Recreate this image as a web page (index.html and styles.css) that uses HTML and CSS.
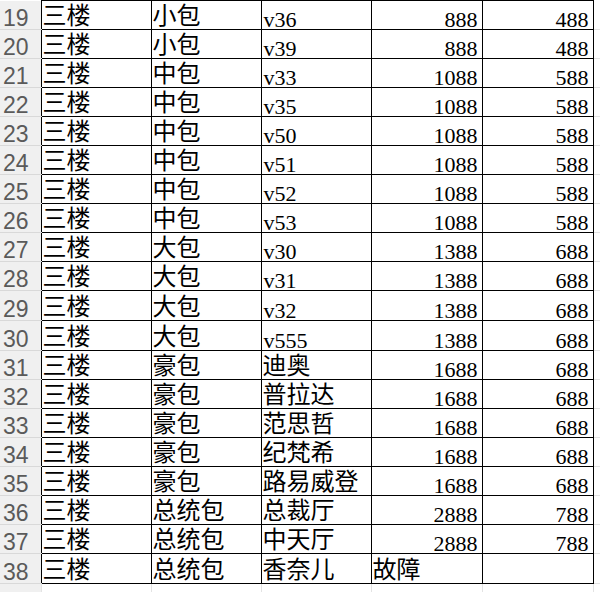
FILE: index.html
```html
<!DOCTYPE html>
<html lang="zh-CN">
<head>
<meta charset="utf-8">
<title>三楼包厢</title>
<link rel="stylesheet" href="styles.css">
</head>
<body>
<div class="sheet">
<table class="grid">
<colgroup>
<col class="w-rh"><col class="w-a"><col class="w-b"><col class="w-c"><col class="w-d"><col class="w-e"><col class="w-x">
</colgroup>
<tbody>
<tr><th class="rh">19</th><td class="c">三楼</td><td class="c">小包</td><td class="t">v36</td><td class="n">888</td><td class="n">488</td><td class="x"></td></tr>
<tr><th class="rh">20</th><td class="c">三楼</td><td class="c">小包</td><td class="t">v39</td><td class="n">888</td><td class="n">488</td><td class="x"></td></tr>
<tr><th class="rh">21</th><td class="c">三楼</td><td class="c">中包</td><td class="t">v33</td><td class="n">1088</td><td class="n">588</td><td class="x"></td></tr>
<tr><th class="rh">22</th><td class="c">三楼</td><td class="c">中包</td><td class="t">v35</td><td class="n">1088</td><td class="n">588</td><td class="x"></td></tr>
<tr><th class="rh">23</th><td class="c">三楼</td><td class="c">中包</td><td class="t">v50</td><td class="n">1088</td><td class="n">588</td><td class="x"></td></tr>
<tr><th class="rh">24</th><td class="c">三楼</td><td class="c">中包</td><td class="t">v51</td><td class="n">1088</td><td class="n">588</td><td class="x"></td></tr>
<tr><th class="rh">25</th><td class="c">三楼</td><td class="c">中包</td><td class="t">v52</td><td class="n">1088</td><td class="n">588</td><td class="x"></td></tr>
<tr><th class="rh">26</th><td class="c">三楼</td><td class="c">中包</td><td class="t">v53</td><td class="n">1088</td><td class="n">588</td><td class="x"></td></tr>
<tr><th class="rh">27</th><td class="c">三楼</td><td class="c">大包</td><td class="t">v30</td><td class="n">1388</td><td class="n">688</td><td class="x"></td></tr>
<tr><th class="rh">28</th><td class="c">三楼</td><td class="c">大包</td><td class="t">v31</td><td class="n">1388</td><td class="n">688</td><td class="x"></td></tr>
<tr class="tall"><th class="rh">29</th><td class="c">三楼</td><td class="c">大包</td><td class="t">v32</td><td class="n">1388</td><td class="n">688</td><td class="x"></td></tr>
<tr class="tall"><th class="rh">30</th><td class="c">三楼</td><td class="c">大包</td><td class="t">v555</td><td class="n">1388</td><td class="n">688</td><td class="x"></td></tr>
<tr><th class="rh">31</th><td class="c">三楼</td><td class="c">豪包</td><td class="c">迪奥</td><td class="n">1688</td><td class="n">688</td><td class="x"></td></tr>
<tr><th class="rh">32</th><td class="c">三楼</td><td class="c">豪包</td><td class="c">普拉达</td><td class="n">1688</td><td class="n">688</td><td class="x"></td></tr>
<tr><th class="rh">33</th><td class="c">三楼</td><td class="c">豪包</td><td class="c">范思哲</td><td class="n">1688</td><td class="n">688</td><td class="x"></td></tr>
<tr><th class="rh">34</th><td class="c">三楼</td><td class="c">豪包</td><td class="c">纪梵希</td><td class="n">1688</td><td class="n">688</td><td class="x"></td></tr>
<tr><th class="rh">35</th><td class="c">三楼</td><td class="c">豪包</td><td class="c">路易威登</td><td class="n">1688</td><td class="n">688</td><td class="x"></td></tr>
<tr><th class="rh">36</th><td class="c">三楼</td><td class="c">总统包</td><td class="c">总裁厅</td><td class="n">2888</td><td class="n">788</td><td class="x"></td></tr>
<tr><th class="rh">37</th><td class="c">三楼</td><td class="c">总统包</td><td class="c">中天厅</td><td class="n">2888</td><td class="n">788</td><td class="x"></td></tr>
<tr class="tall"><th class="rh">38</th><td class="c">三楼</td><td class="c">总统包</td><td class="c">香奈儿</td><td class="c">故障</td><td class="n"></td><td class="x"></td></tr>
<tr class="blank"><th class="rh"></th><td></td><td></td><td></td><td></td><td></td><td class="x"></td></tr>
</tbody>
</table>
</div>
</body>
</html>
```

FILE: styles.css
```css
html, body {
  margin: 0;
  padding: 0;
  background: #ffffff;
}

.sheet {
  width: 600px;
  height: 592px;
  overflow: hidden;
}

.grid {
  border-collapse: collapse;
  table-layout: fixed;
  width: 640px;
  font-family: "Liberation Serif", "Noto Sans CJK SC", serif;
  color: #000;
}

.w-rh { width: 41px; }
.w-a { width: 110px; }
.w-b { width: 110px; }
.w-c { width: 110px; }
.w-d { width: 111px; }
.w-e { width: 111px; }
.w-x { width: 47px; }

.grid tr { height: 29px; }
.grid tr.tall { height: 30px; }

.grid td {
  border: 1px solid #000;
  padding: 0 2px;
  vertical-align: bottom;
  white-space: nowrap;
}

.grid th.rh {
  background: #f0f0f0;
  border: 0;
  border-bottom: 1px solid #d9d9d9;
  border-right: 1px solid #000;
  color: #5a5a5a;
  font-family: "Liberation Sans Narrow", "Liberation Sans", sans-serif;
  font-weight: normal;
  font-size: 23px;
  line-height: 18px;
  text-align: left;
  vertical-align: bottom;
  padding: 0 0 2px 3px;
}

.grid .c {
  font-family: "Noto Sans CJK SC", sans-serif;
  font-size: 24px;
  line-height: 26px;
  padding-bottom: 2px;
  padding-left: 1px;
}

.grid .t {
  font-size: 22px;
  line-height: 18px;
  padding-bottom: 0;
  padding-left: 2px;
}

.grid .n {
  font-size: 22px;
  line-height: 18px;
  text-align: right;
  padding-bottom: 0;
  padding-right: 4px;
}

.grid td.x {
  border-left: 1px solid #000;
  border-right: 0;
  border-top: 0;
  border-bottom: 1px solid #e3e3e3;
}

.grid tr.blank td {
  border-left: 1px solid #e3e3e3;
  border-right: 1px solid #e3e3e3;
  border-bottom: 0;
}

.grid tr.blank th.rh {
  border-right: 1px solid #e3e3e3;
  border-bottom: 0;
}
```
